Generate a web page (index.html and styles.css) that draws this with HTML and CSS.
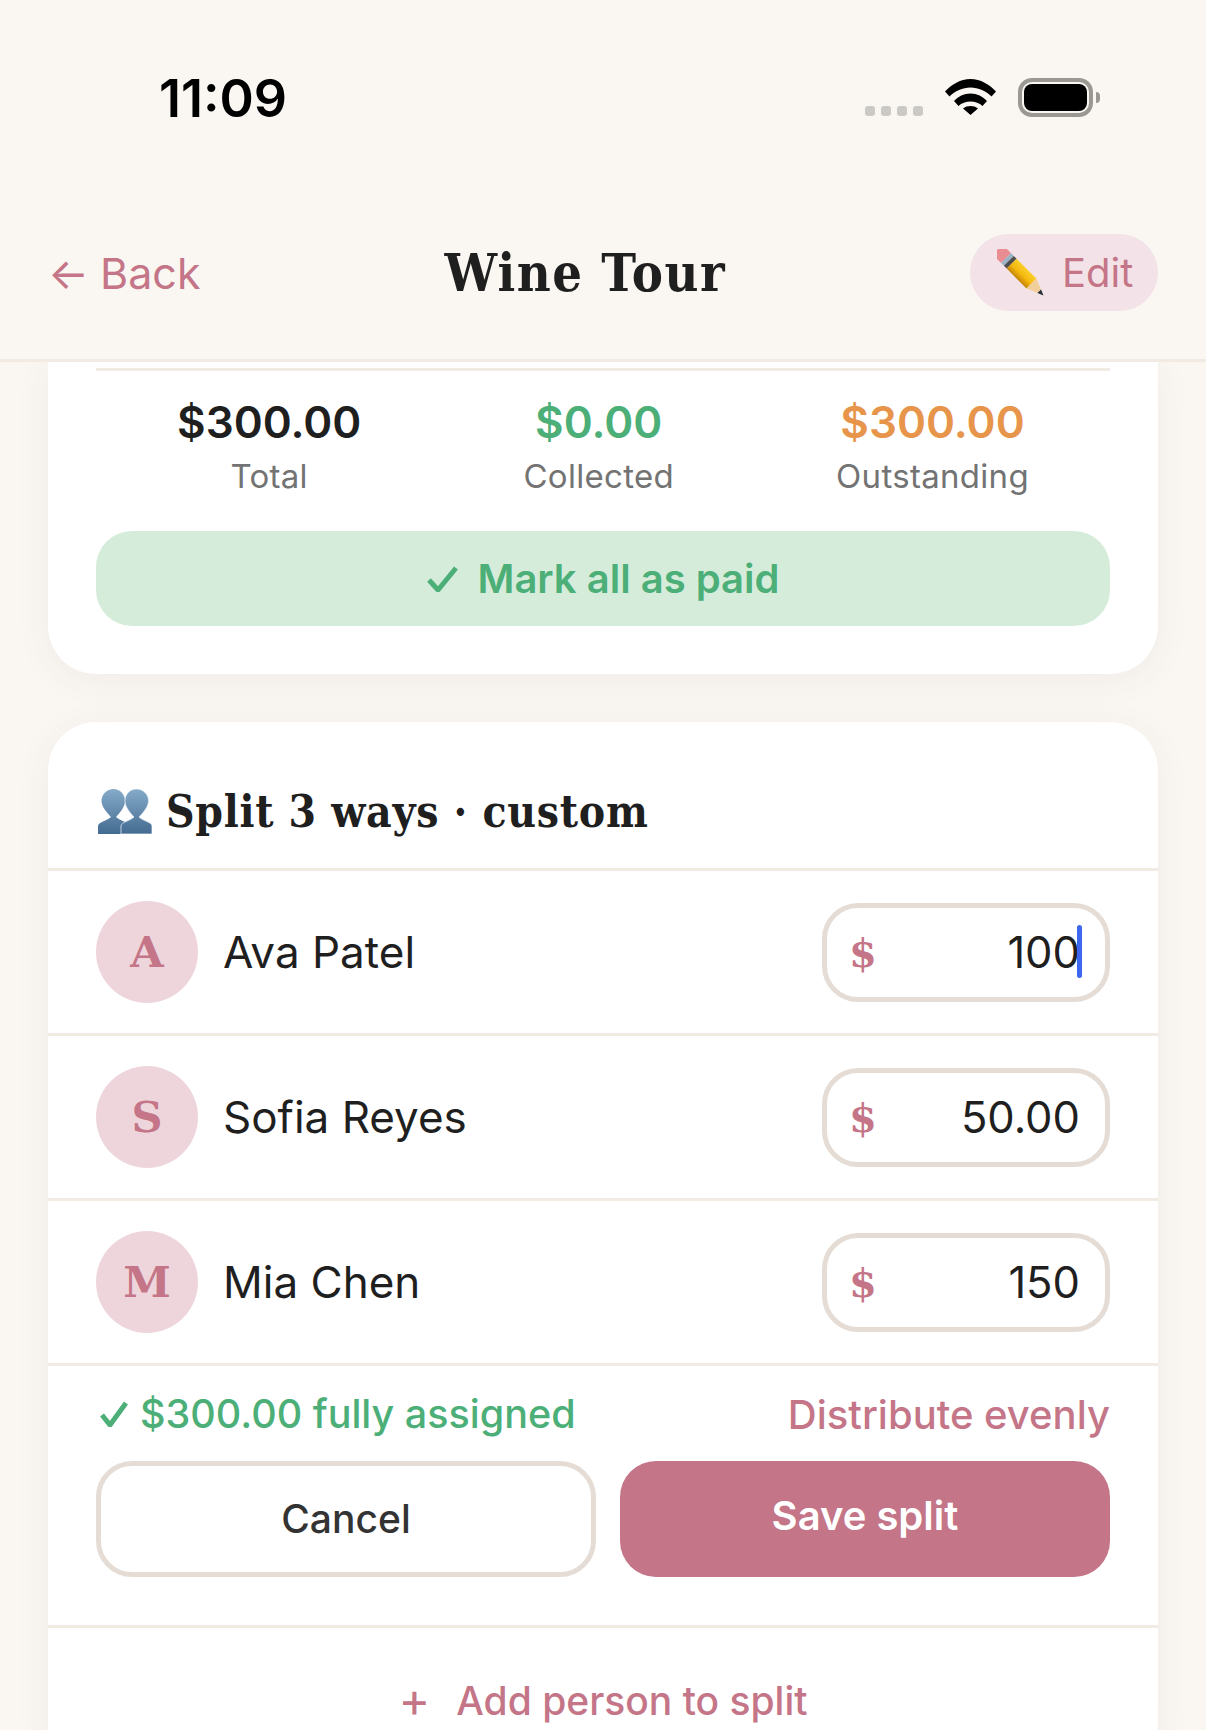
FILE: index.html
```html
<!DOCTYPE html>
<html lang="en">
<head>
<meta charset="utf-8">
<title>Wine Tour</title>
<link rel="stylesheet" href="styles.css">
</head>
<body>
<div class="app">
  <header class="status">
    <span class="time">11:09</span>
    <div class="status-icons">
      <div class="dots"><i></i><i></i><i></i><i></i></div>
      <svg class="wifi" width="51" height="37" viewBox="0 0 51 37"><path d="M0 13.5C6.5 6.5 15.5 1 25.5 1S44.500 6.500 51 13.500L46.500 18.500C41 13 33.500 9.500 25.500 9.500S10 13 4.500 18.500Z"/><path d="M9 23C13 18.500 19 15.500 25.500 15.500S38 18.500 42 23L37.500 28C34.500 25 30 23.500 25.500 23.500S16.500 25 13.500 28Z"/><path d="M18 30.500C20 28.800 22.700 28 25.500 28S31 28.800 33 30.500L25.500 37Z"/></svg>
      <div class="battery"><div class="battery-body"><div class="battery-fill"></div></div><div class="battery-cap"></div></div>
    </div>
  </header>
  <nav class="nav">
    <a class="back"><span class="back-arrow">←</span>Back</a>
    <h1 class="title">Wine Tour</h1>
    <button class="edit">
      <svg class="pencil" width="47" height="47" viewBox="0 0 47 47">
        <defs><linearGradient id="pg" x1="0" y1="0" x2="0" y2="1"><stop offset="0" stop-color="#f9cf2c"/><stop offset=".55" stop-color="#f5b80e"/><stop offset="1" stop-color="#c48405"/></linearGradient></defs>
        <g transform="rotate(45 23.500 23.500)">
          <rect x="-9" y="16.500" width="12" height="14" rx="5" fill="#e98d92"/>
          <rect x="-1" y="16.500" width="4" height="14" fill="#e98d92"/>
          <rect x="3" y="16.500" width="4" height="14" fill="#9cb3c6"/>
          <rect x="7" y="16.500" width="4" height="14" fill="#4d4d4d"/>
          <rect x="11" y="16.500" width="28" height="14" fill="url(#pg)"/>
          <path d="M39 16.500L56 23.500L39 30.500Z" fill="#f2cf9a"/>
          <path d="M50 21L56 23.500L50 26Z" fill="#27303a"/>
        </g>
      </svg>
      <span>Edit</span>
    </button>
  </nav>
  <main class="scroll">
    <section class="card summary">
      <div class="summary-rule"></div>
      <div class="stats">
        <div class="stat"><div class="stat-value">$300.00</div><div class="stat-label">Total</div></div>
        <div class="stat"><div class="stat-value green">$0.00</div><div class="stat-label">Collected</div></div>
        <div class="stat"><div class="stat-value orange">$300.00</div><div class="stat-label">Outstanding</div></div>
      </div>
      <button class="mark-paid">
        <svg width="31" height="26" viewBox="0 0 31 26"><path class="check" d="M2 14L11 24L29 2"/></svg>
        <span>Mark all as paid</span>
      </button>
    </section>
    <section class="card split">
      <h2 class="split-head">
        <svg class="people" width="54" height="45" viewBox="0 0 54 45">
          <defs><linearGradient id="ppl" x1="0" y1="0" x2="0" y2="1"><stop offset="0" stop-color="#86abc9"/><stop offset="1" stop-color="#436a91"/></linearGradient></defs>
          <path fill="url(#ppl)" d="M0 45V37C0 33 9 32 13 28C8 23 3.500 17 3.500 12C3.500 5 9 0 15.500 0C22 0 27 5 27 12C27 17 23 23 18 28C22 32 31 33 31 37V45Z"/>
          <path fill="url(#ppl)" stroke="#dfe9f1" stroke-width=".8" d="M23 45V37C23 33 32 32 36 28C31 23 27 17 27 12C27 5 32 0 38.500 0C45 0 50.500 5 50.500 12C50.500 17 46 23 41 28C45 32 54 33 54 37V45Z"/>
        </svg>
        <span>Split 3 ways · custom</span>
      </h2>
      <div class="person">
        <div class="avatar">A</div><div class="name">Ava Patel</div>
        <div class="amount"><span class="currency">$</span><span class="value focused">100</span></div>
      </div>
      <div class="person">
        <div class="avatar">S</div><div class="name">Sofia Reyes</div>
        <div class="amount"><span class="currency">$</span><span class="value">50.00</span></div>
      </div>
      <div class="person">
        <div class="avatar">M</div><div class="name">Mia Chen</div>
        <div class="amount"><span class="currency">$</span><span class="value">150</span></div>
      </div>
      <div class="split-foot">
        <div class="assign-row">
          <div class="assigned">
            <svg width="28" height="26" viewBox="0 0 28 26"><path class="check" d="M2 14L10 24L26 2"/></svg>
            <span>$300.00 fully assigned</span>
          </div>
          <a class="distribute">Distribute evenly</a>
        </div>
        <div class="actions">
          <button class="btn-cancel">Cancel</button>
          <button class="btn-save">Save split</button>
        </div>
      </div>
      <div class="add-person"><span class="plus">+</span><span>Add person to split</span></div>
    </section>
  </main>
</div>
</body>
</html>
```
FILE: styles.css
```css
* { box-sizing: border-box; }
html, body { margin: 0; padding: 0; }
body {
  width: 1206px;
  height: 1730px;
  overflow: hidden;
  background: #faf7f2;
  font-family: Inter, "Liberation Sans", sans-serif;
  color: #1f1f1f;
}
button { font-family: inherit; border: 0; padding: 0; margin: 0; }
.app { display: flex; flex-direction: column; height: 1730px; }

.status {
  height: 174px;
  padding: 72px 106px 0 159px;
  display: flex;
  justify-content: space-between;
  align-items: flex-start;
}
.time { font-size: 52px; font-weight: 600; line-height: 54px; color: #000; }
.status-icons { display: flex; align-items: flex-start; margin-top: 6px; }
.dots { display: flex; gap: 6px; margin-top: 28px; margin-right: 22px; }
.dots i { width: 10px; height: 10px; border-radius: 3px; background: #cbc9c5; }
.wifi { display: block; margin-right: 22px; fill: #000; }
.battery { display: flex; align-items: center; }
.battery-body {
  width: 75px; height: 39px; padding: 2px;
  border: 4px solid #9a9892; border-radius: 14px;
}
.battery-fill { width: 100%; height: 100%; background: #000; border-radius: 8px; }
.battery-cap { width: 4px; height: 11px; margin-left: 3px; background: #9a9892; border-radius: 0 6px 6px 0; }

.nav {
  height: 188px;
  padding: 60px 48px 0 48px;
  display: flex;
  justify-content: space-between;
  align-items: flex-start;
  border-bottom: 3px solid #f1ebe3;
}
.back { display: flex; align-items: center; height: 77px; font-size: 43px; color: #c47587; }
.back-arrow { margin-right: 11px; }
.title {
  margin: 0; height: 77px; line-height: 77px;
  font-family: "DejaVu Serif", "Liberation Serif", serif;
  font-stretch: condensed;
  font-size: 52px; letter-spacing: 1.500px; font-weight: 700; color: #1f1f1f;
}
.edit {
  display: flex; align-items: center; gap: 18px;
  width: 188px; height: 77px; padding-left: 27px;
  border-radius: 39px; background: #f3e3e8;
  color: #c47587; font-size: 40px;
}
.pencil { display: block; }

.scroll { flex: 1; min-height: 0; overflow: hidden; padding: 0 48px; background: #faf7f2; }
.card { background: #fff; border-radius: 48px; box-shadow: 0 6px 36px rgba(60, 40, 30, .06); }
.summary { border-radius: 0 0 48px 48px; padding: 6px 48px 48px; margin-bottom: 48px; }
.summary-rule { height: 3px; background: #f1ebe3; }
.stats { display: flex; justify-content: space-around; padding-top: 23px; }
.stat { text-align: center; }
.stat-value { font-size: 44px; font-weight: 600; line-height: 56px; color: #1f1f1f; }
.stat-value.green { color: #4caf78; }
.stat-value.orange { color: #e8954c; }
.stat-label { font-size: 33px; line-height: 40px; margin-top: 6px; color: #737373; letter-spacing: .3px; }
.mark-paid {
  display: flex; align-items: center; justify-content: center; gap: 20px;
  width: 100%; height: 95px; margin-top: 35px;
  border-radius: 36px; background: #d6ecdb;
  color: #4caf78; font-size: 40px; font-weight: 600;
}
.check { fill: none; stroke: #4caf78; stroke-width: 5; }

.split { padding-top: 0; }
.split-head {
  display: flex; align-items: center; gap: 14px;
  height: 149px; padding: 33px 48px 0;
  margin: 0; border-bottom: 3px solid #f1ebe3;
  font-family: "DejaVu Serif", "Liberation Serif", serif;
  font-stretch: condensed;
  font-size: 44px; letter-spacing: .7px; font-weight: 700; color: #1f1f1f;
}
.people { display: block; margin-left: 2px; }
.person {
  display: flex; align-items: center;
  height: 165px; padding: 0 48px;
  border-bottom: 3px solid #f1ebe3;
}
.avatar {
  width: 102px; height: 102px; border-radius: 50%;
  display: flex; align-items: center; justify-content: center;
  background: #eed5dc; color: #c47587;
  font-family: "DejaVu Serif", "Liberation Serif", serif;
  font-size: 43px; font-weight: 700;
}
.name { flex: 1; margin-left: 25px; font-size: 44px; color: #1f1f1f; }
.amount {
  width: 288px; height: 99px; padding: 0 25px 0 22px;
  display: flex; align-items: center; justify-content: space-between;
  border: 5px solid #e5ddd5; border-radius: 36px;
}
.currency {
  font-family: "DejaVu Serif", "Liberation Serif", serif;
  font-size: 40px; font-weight: 700; color: #c47587;
}
.value { font-size: 43.500px; color: #1f1f1f; position: relative; }
.value.focused::after {
  content: ""; position: absolute; right: -2px; top: -1px;
  width: 5px; height: 53px; border-radius: 3px; background: #3f66ee;
}

.split-foot { padding: 23px 48px 48px; border-bottom: 3px solid #f1ebe3; }
.assign-row { display: flex; justify-content: space-between; align-items: center; height: 50px; }
.assigned { display: flex; align-items: center; gap: 12px; padding-left: 4px; color: #4caf78; font-size: 39.500px; font-weight: 500; }
.distribute { color: #c47587; font-size: 40px; font-weight: 500; }
.actions { display: flex; gap: 24px; margin-top: 22px; }
.btn-cancel {
  width: 500px; height: 116px; padding-bottom: 1px;
  background: #fff; border: 5px solid #e5ddd5; border-radius: 36px;
  color: #333; font-size: 39px; font-weight: 500;
}
.btn-save {
  flex: 1; height: 116px; padding-bottom: 7px;
  background: #c47587; border-radius: 36px;
  color: #fff; font-size: 40px; font-weight: 600;
}
.add-person {
  display: flex; align-items: center; justify-content: center; gap: 26px;
  height: 144px; color: #c47587; font-size: 39px; font-weight: 500;
}
.plus { font-weight: 400; font-size: 48px; line-height: 46px; }
```
